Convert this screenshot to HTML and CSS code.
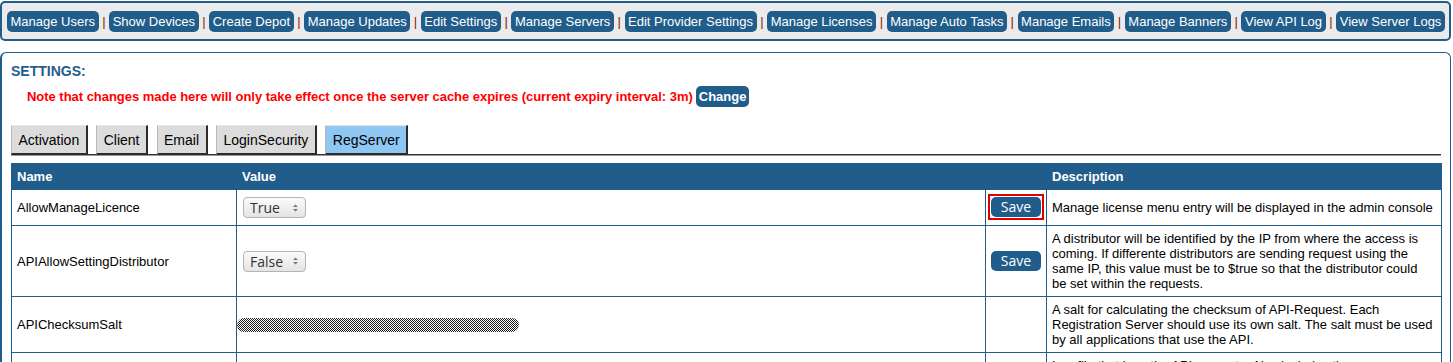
FILE: index.html
```html
<!DOCTYPE html>
<html>
<head>
<meta charset="utf-8">
<title>Settings</title>
<link rel="stylesheet" href="styles.css">
</head>
<body>
<div class="nav">
  <a class="nav-btn">Manage Users</a> <span class="sep">|</span>
  <a class="nav-btn">Show Devices</a> <span class="sep">|</span>
  <a class="nav-btn">Create Depot</a> <span class="sep">|</span>
  <a class="nav-btn">Manage Updates</a> <span class="sep">|</span>
  <a class="nav-btn">Edit Settings</a> <span class="sep">|</span>
  <a class="nav-btn">Manage Servers</a> <span class="sep">|</span>
  <a class="nav-btn">Edit Provider Settings</a> <span class="sep">|</span>
  <a class="nav-btn">Manage Licenses</a> <span class="sep">|</span>
  <a class="nav-btn">Manage Auto Tasks</a> <span class="sep">|</span>
  <a class="nav-btn">Manage Emails</a> <span class="sep">|</span>
  <a class="nav-btn">Manage Banners</a> <span class="sep">|</span>
  <a class="nav-btn">View API Log</a> <span class="sep">|</span>
  <a class="nav-btn">View Server Logs</a>
</div>

<div class="settings">
  <div class="title">SETTINGS:</div>
  <div class="note">
    <span class="note-text">Note that changes made here will only take effect once the server cache expires (current expiry interval: 3m)</span>
    <a class="change-btn">Change</a>
  </div>
  <div class="tabs">
    <span class="tab">Activation</span>
    <span class="tab">Client</span>
    <span class="tab">Email</span>
    <span class="tab">LoginSecurity</span>
    <span class="tab tab-active">RegServer</span>
  </div>
  <table class="grid">
    <colgroup>
      <col class="c-name">
      <col class="c-value">
      <col class="c-save">
      <col class="c-desc">
    </colgroup>
    <thead>
      <tr><th>Name</th><th>Value</th><th></th><th>Description</th></tr>
    </thead>
    <tbody>
      <tr>
        <td>AllowManageLicence</td>
        <td><span class="select">True<svg class="spin" width="7" height="10" viewBox="0 0 7 10"><path d="M1 4 L3.5 1.5 L6 4Z M1 6 L3.5 8.5 L6 6Z" fill="#777"/></svg></span></td>
        <td class="save-cell"><span class="focus-ring"><button class="save-btn">Save</button></span></td>
        <td class="desc">Manage license menu entry will be displayed in the admin console</td>
      </tr>
      <tr>
        <td>APIAllowSettingDistributor</td>
        <td><span class="select">False<svg class="spin" width="7" height="10" viewBox="0 0 7 10"><path d="M1 4 L3.5 1.5 L6 4Z M1 6 L3.5 8.5 L6 6Z" fill="#777"/></svg></span></td>
        <td class="save-cell"><button class="save-btn">Save</button></td>
        <td class="desc">A distributor will be identified by the IP from where the access is coming. If differente distributors are sending request using the same IP, this value must be to $true so that the distributor could be set within the requests.</td>
      </tr>
      <tr>
        <td>APIChecksumSalt</td>
        <td><span class="redacted"></span></td>
        <td></td>
        <td class="desc">A salt for calculating the checksum of API-Request. Each Registration Server should use its own salt. The salt must be used by all applications that use the API.</td>
      </tr>
      <tr>
        <td>APILogFile</td>
        <td></td>
        <td></td>
        <td class="desc">Log file that logs the API requests. Also includes the responses that were sent back to the requesting clients.</td>
      </tr>
    </tbody>
  </table>
</div>
</body>
</html>
```
FILE: styles.css
```css
html, body {
  margin: 0;
  padding: 0;
  background: #ffffff;
  font-family: "Liberation Sans", Arial, sans-serif;
  font-size: 13px;
  color: #000;
}

.nav {
  margin: 1px 2px 0 0;
  border: 2px solid #215d8b;
  border-radius: 5px;
  background: #ebebeb;
  padding: 8px 5px 7px;
  line-height: 21px;
  font-size: 13px;
  white-space: nowrap;
}

.nav-btn {
  display: inline-block;
  background: #215d8b;
  color: #fff;
  padding: 0 3.5px;
  border-radius: 5px;
  line-height: 21px;
  height: 21px;
  vertical-align: top;
}

.sep {
  color: #8b1a0a;
}

.settings {
  margin: 11px 2px 0 0;
  border: 1px solid #215d8b;
  border-left-width: 2px;
  border-radius: 6px 6px 0 0;
  border-bottom: none;
  padding: 10px 9px 20px;
  background: #fff;
}

.title {
  font-weight: bold;
  font-size: 14px;
  line-height: 16px;
  color: #245d8a;
}

.note {
  margin-top: 7px;
  padding-left: 16px;
  display: flex;
  align-items: center;
  gap: 3px;
  height: 21px;
}

.note-text {
  color: #ff0000;
  font-weight: bold;
  font-size: 13px;
  letter-spacing: -0.03px;
}

.change-btn {
  display: inline-block;
  background: #215d8b;
  color: #fff;
  font-weight: bold;
  font-size: 13px;
  line-height: 21px;
  padding: 0 3px;
  border-radius: 5px;
}

.tabs {
  margin-top: 18px;
  display: flex;
  gap: 8.5px;
  border-bottom: 1px solid #333;
  box-shadow: 0 1px 0 #9a9a9a;
  height: 29px;
}

.tab {
  display: block;
  box-sizing: border-box;
  height: 30px;
  padding: 6px 6.5px 0 6.5px;
  font-size: 14px;
  line-height: 16px;
  background: #dcdcdc;
  border-top: 1px solid #e6e6e6;
  border-left: 1px solid #b9b9b9;
  border-right: 2px solid #2b2b2b;
  border-bottom: 2px solid #2b2b2b;
}

.tab-active {
  background: #8ec7f1;
}

.grid {
  margin-top: 8px;
  width: 100%;
  table-layout: fixed;
  border-collapse: collapse;
  font-size: 13px;
}

.c-name { width: 225px; }
.c-value { width: 749px; }
.c-save { width: 61px; }
.c-desc { width: 395px; }

.grid th {
  background: #215d8b;
  color: #fff;
  text-align: left;
  font-weight: bold;
  padding: 5px;
  line-height: 15px;
  border: 1px solid #215d8b;
}

.grid td {
  border: 1px solid #215d8b;
  padding: 5px;
  line-height: 15px;
  vertical-align: middle;
}

.grid td.desc {
  padding: 5px 7.9px 5px 5px;
}

.grid td.save-cell {
  padding: 5px 0;
  text-align: center;
}

.select {
  display: inline-flex;
  align-items: center;
  box-sizing: border-box;
  height: 21px;
  width: 63px;
  margin-left: 1px;
  padding: 0 6px 0 6px;
  border: 1px solid #b4b4b4;
  border-radius: 4px;
  background: linear-gradient(#fbfbfb, #e4e4e4);
  font-family: "Open Sans", sans-serif;
  font-size: 14px;
  color: #333;
  vertical-align: middle;
}

.spin {
  margin-left: auto;
}

.save-btn {
  display: inline-block;
  width: 50px;
  height: 20px;
  margin: 2px 0 3px;
  padding: 0;
  border: none;
  border-radius: 5px;
  background: #215d8b;
  color: #fff;
  font-family: "Open Sans", sans-serif;
  font-size: 14px;
  line-height: 20px;
  text-align: center;
  vertical-align: middle;
}

.focus-ring {
  display: inline-block;
  border: 2px solid #e00000;
  padding: 1px;
  margin: -1px 0 0;
  line-height: 0;
  vertical-align: middle;
}

.focus-ring .save-btn {
  margin: 0;
}

.redacted {
  display: block;
  margin-left: -5px;
  width: 282px;
  height: 14px;
  border-radius: 7px;
  background: repeating-conic-gradient(#1a1a1a 0 25%, #ffffff 0 50%) 0 0 / 2px 2px;
}
```
